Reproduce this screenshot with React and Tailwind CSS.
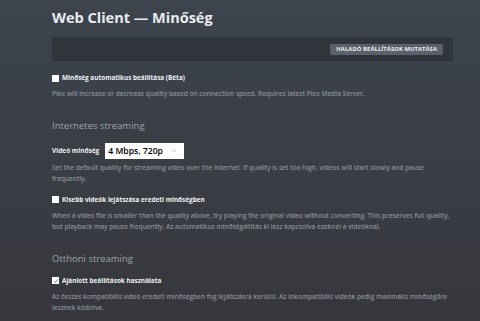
import React from "react";

function Check({ checked, label }) {
  return (
    <label className="flex h-[12px] items-center gap-[3px] text-[6.4px] font-bold leading-[12px] text-[#eef0f2]">
      <span className="flex h-[7px] w-[7px] items-center justify-center bg-white">
        {checked && (
          <svg viewBox="0 0 8 8" className="h-[6px] w-[6px]">
            <path d="M1.5 4.2 L3.2 5.8 L6.5 2" fill="none" stroke="#555" strokeWidth="1.1" />
          </svg>
        )}
      </span>
      <span>{label}</span>
    </label>
  );
}

function Desc({ children }) {
  return (
    <p className="whitespace-nowrap text-[6.5px] font-semibold leading-[11.5px] text-[#8a8f97]">
      {children}
    </p>
  );
}

export default function App() {
  return (
    <div
      className="h-[321px] w-[480px] overflow-hidden bg-gradient-to-b from-[#3d444e] to-[#36373c] pl-[52px] pr-[27px]"
      style={{ fontFamily: '"Open Sans", "Noto Sans", sans-serif' }}
    >
      <h1 className="pt-[7px] text-[14.5px] font-bold leading-[22px] text-[#e9ebee]">
        Web Client — Minőség
      </h1>

      {/* toolbar */}
      <div className="mt-[8px] flex h-[24px] items-center justify-end bg-[#30353c] pr-[10px]">
        <button className="h-[11px] rounded-[2px] bg-[#5b616a] px-[6px] text-[5.8px] font-bold leading-[11px] tracking-[0.1px] text-[#eceef0]">
          HALADÓ BEÁLLÍTÁSOK MUTATÁSA
        </button>
      </div>

      <div className="mt-[11px]">
        <Check label="Minőség automatikus beállítása (Béta)" />
      </div>
      <div className="mt-[4px]">
        <Desc>
          Plex will increase or decrease quality based on connection speed. Requires latest Plex Media Server.
        </Desc>
      </div>

      <h2 className="mt-[19px] text-[9.5px] leading-[14px] text-[#9ea3aa]">Internetes streaming</h2>

      <div className="mt-[10px] flex items-center gap-[6px]">
        <span className="text-[6.5px] font-bold text-[#eef0f2]">Videó minőség</span>
        <div className="flex h-[16px] w-[79px] items-center justify-between bg-white pl-[3px] pr-[7px]">
          <span className="text-[8.6px] font-semibold leading-[16px] text-black">4 Mbps, 720p</span>
          <svg viewBox="0 0 8 8" className="h-[5px] w-[5px]">
            <path d="M1.5 3 L4 5.5 L6.5 3" fill="none" stroke="#999" strokeWidth="1" />
          </svg>
        </div>
      </div>
      <div className="mt-[3px]">
        <Desc>
          Set the default quality for streaming video over the internet. If quality is set too high, videos will start slowly and pause
          <br />
          frequently.
        </Desc>
      </div>

      <div className="mt-[9px]">
        <Check label="Kisebb videók lejátszása eredeti minőségben" />
      </div>
      <div className="mt-[4px]">
        <Desc>
          When a video file is smaller than the quality above, try playing the original video without converting. This preserves full quality,
          <br />
          but playback may pause frequently. Az automatikus minőségállítás ki lesz kapcsolva ezeknél a videóknál.
        </Desc>
      </div>

      <h2 className="mt-[19px] text-[9.5px] leading-[14px] text-[#9ea3aa]">Otthoni streaming</h2>

      <div className="mt-[9px]">
        <Check checked label="Ajánlott beállítások használata" />
      </div>
      <div className="mt-[4px]">
        <Desc>
          Az összes kompatibilis videó eredeti minőségben fog lejátszásra kerülni. Az inkompatibilis videók pedig maximális minőségűre
          <br />
          lesznek kódolva.
        </Desc>
      </div>
    </div>
  );
}
